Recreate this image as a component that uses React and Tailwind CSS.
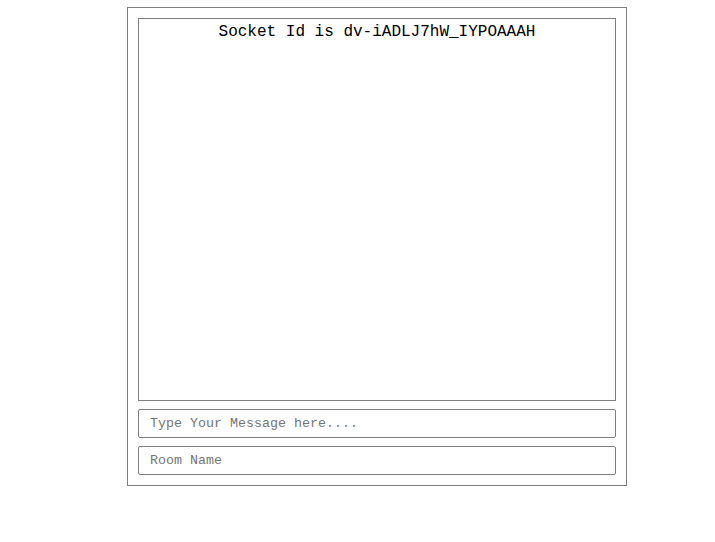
export default function App() {
  return (
    <div className="min-h-[542px] bg-white font-['Liberation_Mono',monospace]">
      <div className="ml-[127px] pt-[7px]">
        <div className="flex w-[500px] flex-col gap-[8px] border border-[#808080] p-[10px]">
          <div className="h-[383px] border border-[#808080] pt-[1px] text-center text-[16px] text-black">
            Socket Id is dv-iADLJ7hW_IYPOAAAH
          </div>
          <input
            className="h-[29px] w-full rounded-[2px] border border-[#808080] px-[11px] text-[13.33px] outline-none placeholder:text-[#757575]"
            placeholder="Type Your Message here...."
          />
          <input
            className="h-[29px] w-full rounded-[2px] border border-[#808080] px-[11px] text-[13.33px] outline-none placeholder:text-[#757575]"
            placeholder="Room Name"
          />
        </div>
      </div>
    </div>
  );
}
